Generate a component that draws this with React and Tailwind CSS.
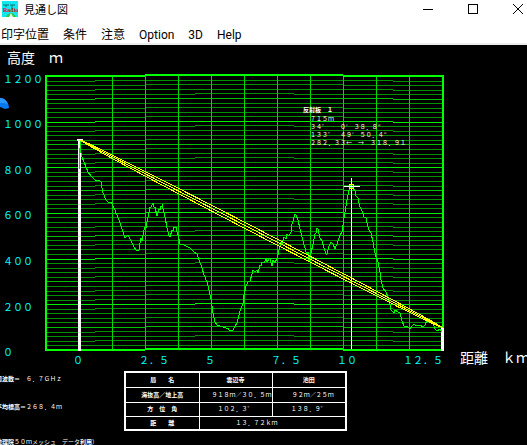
const menuItems = ["印字位置", "条件", "注意", "Option", "3D", "Help"];

const heightLabels = [
  { text: "１２００", y: 83 },
  { text: "１０００", y: 128 },
  { text: "８００", y: 174 },
  { text: "６００", y: 219 },
  { text: "４００", y: 265 },
  { text: "２００", y: 311 },
  { text: "０", y: 356 },
];

const distanceLabels = [
  { text: "０", x: 73 },
  { text: "２．５", x: 139 },
  { text: "５", x: 205 },
  { text: "７．５", x: 271 },
  { text: "１０", x: 337 },
  { text: "１２．５", x: 403 },
];

// the middle of the path is lifted by the earth's curvature
const bands = [
  { from: 46, to: 95, lift: 0.23 },
  { from: 95, to: 145, lift: 0.61 },
  { from: 145, to: 195, lift: 0.86 },
  { from: 195, to: 294, lift: 0.98 },
  { from: 294, to: 343, lift: 0.86 },
  { from: 343, to: 393, lift: 0.61 },
  { from: 393, to: 443, lift: 0.23 },
];

const columns = [112, 145, 178, 211, 244, 277, 310, 343, 376, 409];

const terrain =
  "80,141 80,148 82,157 86,167 88,172 91,176 95,180 99,180 101,182 102,188 103,193 106,200 108,202 111,202 115,210 120,223 125,238 128,235 132,243 134,247 136,250 138,251 139,250 140,243 141,238 142,241 144,230 145,227 146,228 147,222 150,207 151,207 153,203 154,207 155,207 157,216 159,209 160,210 161,206 162,206 162,204 163,209 165,217 167,228 169,236 170,237 172,230 173,231 174,227 176,227 177,232 178,235 180,244 184,245 190,248 194,252 197,254 199,260 202,268 204,275 207,282 209,290 211,299 213,313 215,322 217,325 220,326 226,328 228,328 229,330 233,330 235,326 237,323 240,311 241,308 243,304 244,295 246,286 248,282 250,281 252,274 253,270 255,272 257,270 258,273 260,265 261,266 262,262 264,263 266,259 267,262 270,258 271,263 272,266 273,260 275,263 277,258 278,255 280,246 281,242 282,244 284,237 286,239 287,234 289,236 291,232 292,224 295,214 296,215 298,220 300,229 302,237 304,245 307,255 308,252 309,262 311,253 313,244 315,234 316,233 317,228 318,229 320,238 322,241 324,248 326,254 327,254 329,246 331,242 333,244 335,249 338,241 340,235 342,232 343,225 345,212 347,200 349,190 351,185 353,188 355,191 356,196 358,198 360,207 362,211 364,217 366,218 367,223 369,230 371,233 373,242 374,248 376,257 378,262 380,272 381,280 383,288 386,292 388,297 390,305 391,310 394,313 395,310 398,312 400,313 402,321 404,326 408,327 410,329 412,326 414,324 416,326 420,325 423,327 425,325 427,320 429,322 431,320 433,323 435,329 437,331 440,329 442,332";

function sightLine(offset) {
  let points = "";
  for (let i = 0; i <= 40; i++) {
    const t = i / 40;
    const x = 80 + 363 * t;
    const y = 140 + 188 * t + offset * Math.sqrt(4 * t * (1 - t));
    points += `${x.toFixed(1)},${y.toFixed(1)} `;
  }
  return points;
}

function rowColor(i) {
  if (i % 10 === 0) return "#00f000";
  if (i % 5 === 0) return "#00c000";
  return "#009000";
}

function GridRow({ index }) {
  let d = "";
  bands.forEach((band) => {
    const y = Math.round(76.2 + index * 4.565 - band.lift) + 0.5;
    d += `M${band.from} ${y}H${band.to}`;
  });
  return <path d={d} stroke={rowColor(index)} />;
}

function TitleBar() {
  return (
    <header className="flex h-6 shrink-0 items-start justify-between bg-white text-black">
      <div className="flex items-start gap-1.5 pl-0.5">
        <svg width="16" height="18" viewBox="0 0 16 18" aria-hidden="true">
          <rect y="1" width="16" height="16" fill="#10e8f0" />
          <path d="M1 5h6M8 5h5M10 5v4M4 5v2" stroke="#087070" fill="none" />
          <path d="M4 17c1-3 3-4 5-4s4 2 5 4z" fill="#30c850" />
          <path d="M7 17l2-4 2 4z" fill="#d8ffe0" />
          <text x="1" y="12" fontSize="6" fontWeight="700" fill="#c81818" fontFamily="Liberation Serif, serif">
            Radio
          </text>
        </svg>
        <h1 className="text-[11px] leading-5">見通し図</h1>
      </div>
      <div className="flex">
        <button aria-label="Minimize" className="flex h-[18px] w-[45px] items-center justify-center">
          <svg width="10" height="10" stroke="#000" shapeRendering="crispEdges">
            <path d="M0 5.5h10" />
          </svg>
        </button>
        <button aria-label="Maximize" className="flex h-[18px] w-[45px] items-center justify-center">
          <svg width="10" height="10" stroke="#000" fill="none" shapeRendering="crispEdges">
            <rect x="0.5" y="0.5" width="9" height="9" />
          </svg>
        </button>
        <button aria-label="Close" className="flex h-[18px] w-8 items-center justify-end pr-1">
          <svg width="10" height="10" stroke="#000">
            <path d="M0 0l10 10M10 0L0 10" />
          </svg>
        </button>
      </div>
    </header>
  );
}

function MenuBar() {
  return (
    <nav className="flex h-[21px] shrink-0 items-center gap-3.5 border-b-2 border-[#ececec] bg-white pt-0.5 pl-px font-['Roboto','Noto_Sans_CJK_JP',sans-serif] text-[12px] leading-4 text-black">
      {menuItems.map((item) => (
        <button key={item}>{item}</button>
      ))}
    </nav>
  );
}

function Profile() {
  const rows = Array.from({ length: 59 }, (_, i) => i + 1);

  return (
    <svg viewBox="0 45 527 324" className="block w-full" role="img" aria-label="見通し図">
      <path d="M0 98C5 98 9 103 9 108L5 109L0 107Z" fill="#0878f0" />
      <path d="M0 98C4 98 7 101 8 104L4 103L0 103Z" fill="#2898ff" />

      <g shapeRendering="crispEdges" fill="none">
        {rows.map((i) => (
          <GridRow key={i} index={i} />
        ))}
        {columns.map((x) => (
          <path key={x} d={`M${x + 0.5} 76V350`} stroke="#00d800" />
        ))}
        <path d="M45 76H145M145 75H343M343 76H444M45 350H145M145 349H343M343 350H444" stroke="#00ff00" strokeWidth="2" />
        <path d="M46 75V351M443 75V351" stroke="#00ff00" strokeWidth="2" />

        <path d="M79.5 139V351M442.5 328V351" stroke="#fff" strokeWidth="3" />
        <path d="M77 140H83" stroke="#fff" strokeWidth="2" />
        <polyline points={terrain} stroke="#00ff00" />
        <path d="M79.5 148V169" stroke="#00d800" />

        <polyline points={sightLine(-3)} stroke="#ffff00" />
        <polyline points={sightLine(0)} stroke="#ffff00" />
        <polyline points={sightLine(3)} stroke="#ffff00" />

        <path d="M351.5 178V349M344 186.5H360" stroke="#fff" />
        <rect x="349.5" y="184.5" width="4" height="4" stroke="#ffff00" />
      </g>

      <g fill="#fff" fontSize="14">
        <text x="7" y="63">高度　ｍ</text>
        <text x="460" y="363">距離　ｋｍ</text>
      </g>

      <g fill="#00ffff" fontSize="10">
        {heightLabels.map((label) => (
          <text key={label.y} x="3" y={label.y}>
            {label.text}
          </text>
        ))}
        {distanceLabels.map((label) => (
          <text key={label.x} x={label.x} y="364">
            {label.text}
          </text>
        ))}
      </g>

      <g fill="#fff" fontSize="6">
        <text x="303" y="112" fontWeight="700">反射板　１</text>
        <text x="310" y="121">７１５ｍ</text>
        <text x="310" y="129">３４゜　　０′　３８．８″</text>
        <text x="310" y="137">１３３゜　４９′　５０．４″</text>
        <text x="310" y="145">２８２．３３←　→　３１８．９１</text>
      </g>
    </svg>
  );
}

function StationTable() {
  return (
    <table className="mt-0.5 w-[221px] shrink-0 table-fixed border-collapse border-2 border-white text-center text-[6px] leading-[8px] whitespace-pre [&_td]:border [&_td]:border-white [&_td]:p-0 [&_th]:border [&_th]:border-white [&_th]:p-0">
      <colgroup>
        <col className="w-[74px]" />
        <col className="w-[73px]" />
        <col className="w-[74px]" />
      </colgroup>
      <thead>
        <tr className="h-[15px]">
          <th scope="col">局　　名</th>
          <th scope="col">雲辺寺</th>
          <th scope="col">池田</th>
        </tr>
      </thead>
      <tbody>
        <tr className="h-[15px]">
          <th scope="row">海抜高／地上高</th>
          <td className="text-right">９１８ｍ／３０．５ｍ</td>
          <td>
            <div className="pl-2">９２ｍ／２５ｍ</div>
          </td>
        </tr>
        <tr className="h-[14px]">
          <th scope="row">方　位　角</th>
          <td>１０２．３゜</td>
          <td>１３８．９゜</td>
        </tr>
        <tr className="h-[14px]">
          <th scope="row">距　　離</th>
          <td colSpan={2}>
            <div className="pl-9 text-left">１３．７２ｋｍ</div>
          </td>
        </tr>
      </tbody>
    </table>
  );
}

export default function App() {
  return (
    <div className="flex h-screen flex-col overflow-hidden bg-black font-['Noto_Sans','Noto_Sans_CJK_JP',sans-serif] text-white">
      <TitleBar />
      <MenuBar />
      <main className="flex-1 font-['Noto_Sans_CJK_JP',sans-serif]">
        <Profile />
        <section className="flex items-start">
          <div className="flex w-[124px] shrink-0 flex-col pt-1.5 text-[6px] leading-[8px] whitespace-nowrap">
            <p className="-ml-1">
              <b>周波数＝</b>　６．７ＧＨｚ
            </p>
            <p className="mt-5 -ml-1">
              <b>平均標高＝</b>２６８．４ｍ
            </p>
            <p className="mt-[27px] -ml-2.5">
              <b>（地理院</b>５０ｍメッシュ　データ<b>利用</b>）
            </p>
          </div>
          <StationTable />
        </section>
      </main>
    </div>
  );
}
